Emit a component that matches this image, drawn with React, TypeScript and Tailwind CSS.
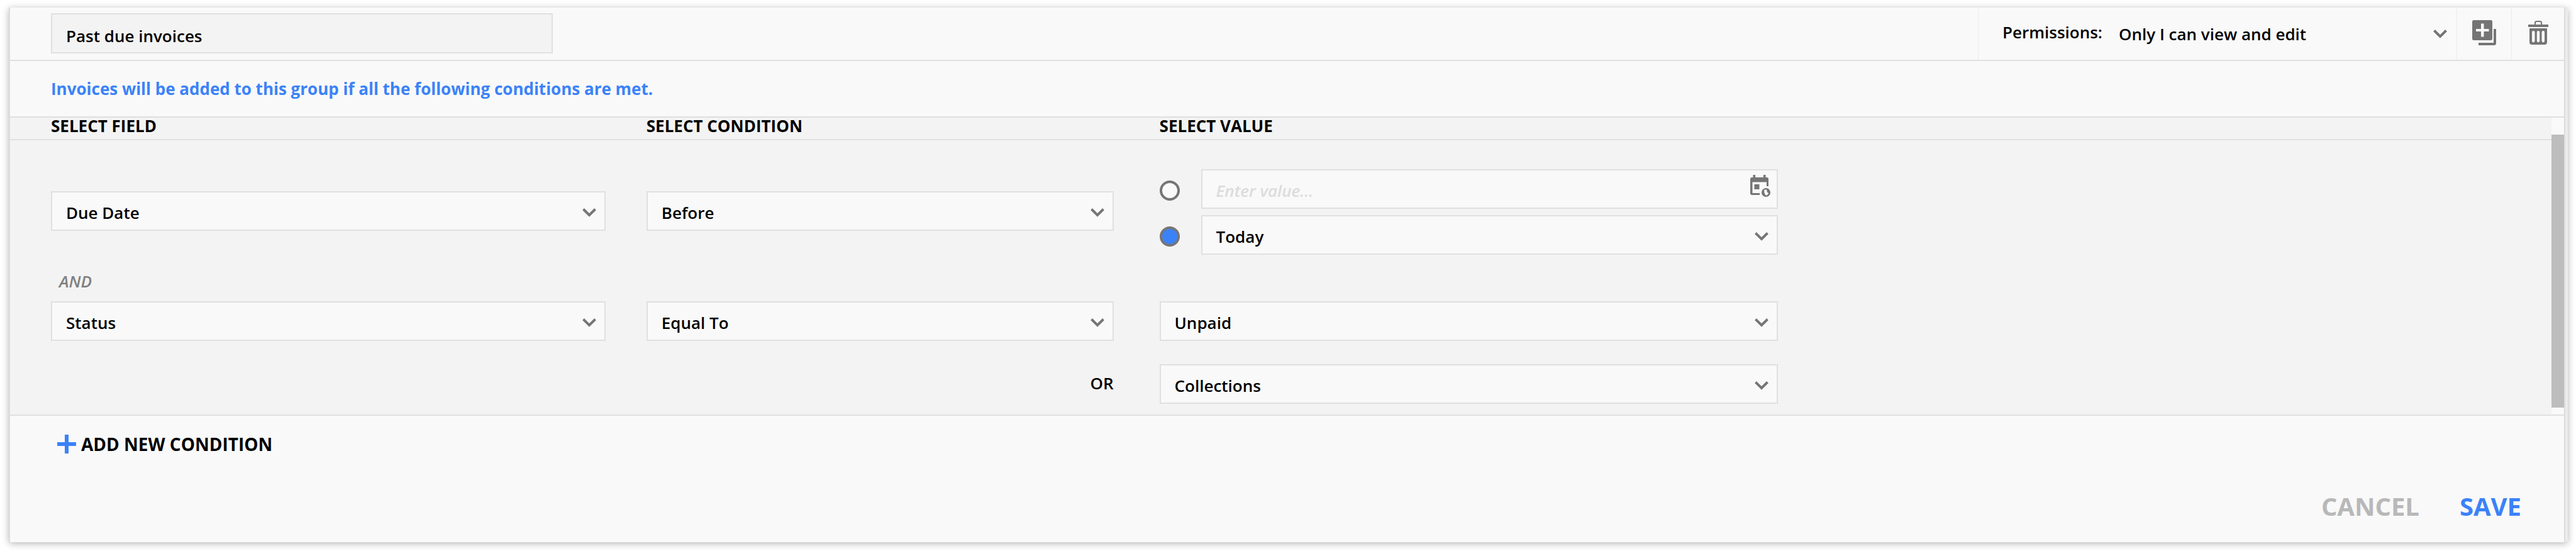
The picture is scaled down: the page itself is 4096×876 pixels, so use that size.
import { InputHTMLAttributes, SelectHTMLAttributes, useState } from "react";
import clsx from "clsx";

const columns = "grid grid-cols-[882fr_743fr_992fr_1165fr] gap-x-[65px] pl-[65px]";

function Chevron({ className }: { className?: string }) {
  return (
    <svg
      viewBox="0 0 22 14"
      className={clsx("pointer-events-none absolute h-[14px] w-[22px]", className)}
      fill="none"
      stroke="#757575"
      strokeWidth="4"
      aria-hidden="true"
    >
      <path d="M1.5 1.5 11 11 20.5 1.5" />
    </svg>
  );
}

function Select({
  options,
  ...props
}: { options: string[] } & SelectHTMLAttributes<HTMLSelectElement>) {
  return (
    <div className="relative w-full">
      <select
        {...props}
        className="block h-[63px] w-full appearance-none border-2 border-[#e0e0e0] bg-[#f9f9f9] pt-[5px] pr-14 pl-[22px] font-semibold text-black outline-none"
      >
        {options.map((o) => (
          <option key={o}>{o}</option>
        ))}
      </select>
      <Chevron className="top-[27px] right-[15px]" />
    </div>
  );
}

function Radio(props: InputHTMLAttributes<HTMLInputElement>) {
  return (
    <input
      {...props}
      type="radio"
      className="mt-[5px] size-8 shrink-0 appearance-none rounded-full border-4 border-[#757575] bg-[#f9f9f9] checked:bg-[#3b82f8]"
    />
  );
}

function CopyIcon() {
  return (
    <svg viewBox="0 0 38 40" className="h-10 w-[38px]" fill="#757575" aria-hidden="true">
      <path
        fillRule="evenodd"
        d="M2.5 0h27A2.5 2.5 0 0 1 32 2.5v27a2.5 2.5 0 0 1-2.5 2.5h-27A2.5 2.5 0 0 1 0 29.5v-27A2.5 2.5 0 0 1 2.5 0zM14 5.500V14H6v4h8v8.500h4.500V18h8v-4h-8V5.500z"
      />
      <path d="M34 14h4v22.500a3.500 3.500 0 0 1-3.500 3.500H10v-4h24z" />
    </svg>
  );
}

function TrashIcon() {
  return (
    <svg viewBox="0 0 32 38" className="h-[38px] w-8" fill="#757575" aria-hidden="true">
      <path d="M11 6V3a2 2 0 0 1 2-2h6a2 2 0 0 1 2 2v3" fill="none" stroke="#757575" strokeWidth="2" />
      <path d="M0 6h32v4H0z" />
      <path
        fillRule="evenodd"
        d="M2 12h28v22a4 4 0 0 1-4 4H6a4 4 0 0 1-4-4zM8 16q-2 0-2 2v14q0 2 2 2.500 2.500-1 2.500-2.500V18Q10.500 16 8 16zM16 16q-2.200 0-2.200 2v14q0 1.500 2.200 2.500 2.200-1 2.200-2.500V18q0-2-2.200-2zM24 16q-2.500 0-2.500 2v14q0 1.500 2.500 2.500 2-.500 2-2.500V18q0-2-2-2z"
      />
    </svg>
  );
}

function CalendarIcon() {
  return (
    <svg viewBox="0 0 32 36" className="h-9 w-8" fill="#757575" aria-hidden="true">
      <path d="M4.500 0h3.500v4h13V0h3.500v4H26a3 3 0 0 1 3 3v11h-3v-6.500H3.500V29H15v3H3a3 3 0 0 1-3-3V7a3 3 0 0 1 3-3h1.500z" />
      <path d="M6.500 15h8v8h-8z" />
      <circle cx="25" cy="28" r="7" />
      <path d="M22.300 23.600h3.900l.5 3.700 2.600 2.200-3.100 3.300-2.200-.8-1.700-4z" fill="#f9f9f9" />
    </svg>
  );
}

export default function App() {
  const [name, setName] = useState("Past due invoices");
  const [mode, setMode] = useState("preset");
  const [date, setDate] = useState("");

  return (
    <main className="bg-white pt-3 pr-[13px] pb-[14px] pl-[14px] font-['Open_Sans','Noto_Sans',sans-serif] text-[26px] leading-9 text-black">
      <section className="rounded-b-sm bg-[#ececec] pr-1 shadow-[0_2px_12px_rgba(0,0,0,0.3)]">
        <div className="border-x-2 border-[#dcdcdc] bg-[#f9f9f9]">
          <header className="flex h-[85px] items-stretch justify-between border-b-2 border-[#e0e0e0] pl-[65px]">
            <input
              aria-label="Group name"
              value={name}
              onChange={(e) => setName(e.target.value)}
              className="mt-[9px] h-16 w-full max-w-[798px] border-2 border-[#e0e0e0] bg-[#f3f3f3] px-[22px] pt-2 font-semibold outline-none"
            />
            <div className="flex">
              <div className="flex w-[761px] border-l border-[#ececec] pl-[38px]">
                <label htmlFor="permissions" className="pt-[21px] font-semibold">
                  Permissions:
                </label>
                <div className="relative flex-1">
                  <select
                    id="permissions"
                    className="h-full w-full appearance-none bg-transparent pl-[26px] font-semibold outline-none"
                  >
                    <option>Only I can view and edit</option>
                    <option>Everyone can view</option>
                  </select>
                  <Chevron className="top-[35px] right-[15px]" />
                </div>
              </div>
              <button
                aria-label="Duplicate group"
                className="flex w-[87px] items-center justify-center border-l border-[#ececec] pb-[3px]"
              >
                <CopyIcon />
              </button>
              <button
                aria-label="Delete group"
                className="flex w-[84px] items-center justify-center border-l border-[#ececec] pb-[3px]"
              >
                <TrashIcon />
              </button>
            </div>
          </header>

          <p className="flex h-[88px] items-center pl-[65px] font-bold text-[#3b82f8]">
            Invoices will be added to this group if all the following conditions are met.
          </p>

          <div className="flex border-y-2 border-[#e0e0e0]">
            <div className="flex-1 bg-[#f3f3f3]">
              <div className={clsx(columns, "h-9 border-b-2 border-[#e0e0e0] leading-[26px] font-bold")}>
                <h2>SELECT FIELD</h2>
                <h2>SELECT CONDITION</h2>
                <h2 className="pl-2">SELECT VALUE</h2>
              </div>

              <div className={clsx(columns, "pt-[46px]")}>
                <div className="pt-[35px]">
                  <Select aria-label="Field" options={["Due Date", "Status"]} />
                </div>
                <div className="pt-[35px]">
                  <Select aria-label="Condition" options={["Before", "After"]} />
                </div>
                <div className="flex flex-col gap-[10px] pl-2">
                  <div className="flex items-center gap-[34px]">
                    <Radio
                      name="mode"
                      aria-label="Specific date"
                      checked={mode === "date"}
                      onChange={() => setMode("date")}
                    />
                    <div className="relative flex-1">
                      <input
                        aria-label="Date value"
                        value={date}
                        onChange={(e) => setDate(e.target.value)}
                        placeholder="Enter value..."
                        className="block h-[63px] w-full border-2 border-[#e0e0e0] bg-[#f9f9f9] pt-[5px] pr-14 pl-[22px] font-semibold outline-none placeholder:text-[#dcdcdc] placeholder:italic"
                      />
                      <button aria-label="Pick a date" className="absolute top-[9px] right-3">
                        <CalendarIcon />
                      </button>
                    </div>
                  </div>
                  <div className="flex items-center gap-[34px]">
                    <Radio
                      name="mode"
                      aria-label="Preset date"
                      checked={mode === "preset"}
                      onChange={() => setMode("preset")}
                    />
                    <Select aria-label="Preset" options={["Today", "Yesterday"]} />
                  </div>
                </div>
              </div>

              <p className="mt-6 pb-[14px] pl-[78px] font-semibold text-[#808080] italic">AND</p>

              <div className={clsx(columns, "gap-y-[37px] pb-[17px]")}>
                <Select aria-label="Field" defaultValue="Status" options={["Due Date", "Status"]} />
                <Select aria-label="Condition" options={["Equal To", "Not Equal To"]} />
                <div className="pl-2">
                  <Select aria-label="Value" options={["Unpaid", "Paid"]} />
                </div>
                <p className="col-start-2 pt-3 text-right font-semibold">OR</p>
                <div className="pl-2">
                  <Select aria-label="Alternative value" options={["Collections", "Paid"]} />
                </div>
              </div>
            </div>
            {/* scrollbar */}
            <div className="w-5 pt-[27px] pb-[11px]">
              <div className="h-full bg-[#bdbdbd]" />
            </div>
          </div>

          <footer className="pt-[25px] pb-[29px]">
            <button className="ml-[75px] flex items-center gap-2 text-[28px] leading-10 font-bold">
              <svg viewBox="0 0 30 30" className="size-[30px]" fill="#3b82f8" aria-hidden="true">
                <path d="M12 0h6v12h12v6H18v12h-6V18H0v-6h12z" />
              </svg>
              ADD NEW CONDITION
            </button>
            <div className="mt-[51px] flex justify-end gap-16 pr-[68px] text-[40px] leading-[56px] font-bold">
              <button className="text-[#b8b8b8]">CANCEL</button>
              <button className="text-[#3b82f8]">SAVE</button>
            </div>
          </footer>
        </div>
      </section>
    </main>
  );
}
